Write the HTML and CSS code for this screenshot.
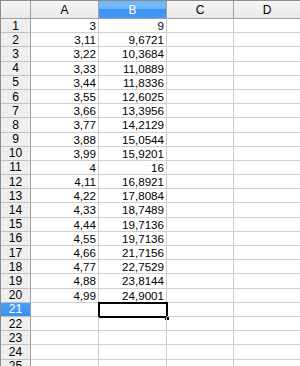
FILE: index.html
```html
<!DOCTYPE html>
<html lang="de">
<head>
    <meta charset="UTF-8">
    <title>Tabelle</title>
    <link rel="stylesheet" href="styles.css">
</head>
<body>
    <div class="sheet">
        <div class="corner"></div>
        <div class="col-head">A</div>
        <div class="col-head active">B</div>
        <div class="col-head">C</div>
        <div class="col-head">D</div>
    </div>
    <script>
        const data = [
            ['3', '9'], ['3,11', '9,6721'], ['3,22', '10,3684'], ['3,33', '11,0889'],
            ['3,44', '11,8336'], ['3,55', '12,6025'], ['3,66', '13,3956'], ['3,77', '14,2129'],
            ['3,88', '15,0544'], ['3,99', '15,9201'], ['4', '16'], ['4,11', '16,8921'],
            ['4,22', '17,8084'], ['4,33', '18,7489'], ['4,44', '19,7136'], ['4,55', '19,7136'],
            ['4,66', '21,7156'], ['4,77', '22,7529'], ['4,88', '23,8144'], ['4,99', '24,9001']
        ];
        const sheet = document.querySelector('.sheet');

        for (let r = 1; r <= 25; r++) {
            const head = document.createElement('div');
            head.className = 'row-head' + (r === 21 ? ' active' : '');
            head.textContent = r;
            sheet.appendChild(head);

            const values = data[r - 1] || ['', ''];
            for (let c = 0; c < 4; c++) {
                const cell = document.createElement('div');
                cell.className = 'cell';
                if (c < 2) cell.textContent = values[c];
                if (r === 21 && c === 1) cell.classList.add('cursor');
                sheet.appendChild(cell);
            }
        }
    </script>
</body>
</html>
```

FILE: styles.css
```css
body {
    margin: 0;
    padding: 0;
    background: #fff;
    overflow: hidden;
    font-family: 'Liberation Sans', Arial, sans-serif;
}

.sheet {
    display: grid;
    grid-template-columns: 30px 68px 68px 67px 67px;
    grid-template-rows: 18px repeat(25, 14.2px);
    border-top: 1px solid #8c8c8c;
    border-left: 1px solid #8c8c8c;
    width: 300px;
    box-sizing: border-box;
}

.corner,
.col-head,
.row-head {
    background: linear-gradient(#f7f7f7, #e8e8e8);
    color: #000;
    font-size: 12px;
    display: flex;
    align-items: center;
    justify-content: center;
    box-sizing: border-box;
}

.corner {
    border-right: 1px solid #a0a0a0;
    border-bottom: 1px solid #a0a0a0;
}

.col-head {
    border-right: 1px solid #a0a0a0;
    border-bottom: 1px solid #a0a0a0;
    padding-top: 1px;
}

.row-head {
    border-right: 1px solid #a0a0a0;
    border-bottom: 1px solid #c0c0c0;
    background: #efefef;
    line-height: 1;
}

.col-head.active {
    background: linear-gradient(#70b6fb 0%, #70b6fb 45%, #3d92f2 50%, #4299f5 100%);
    color: #fff;
}

.row-head.active {
    background: linear-gradient(#4b9ff5, #3c90ee);
    color: #fff;
}

.cell {
    border-right: 1px solid #cfcfcf;
    border-bottom: 1px solid #cfcfcf;
    box-sizing: border-box;
    font-size: 11.6px;
    text-align: right;
    padding-right: 2px;
    line-height: 13px;
    color: #000;
    position: relative;
}

.cursor {
    outline: 2px solid #000;
    outline-offset: -1px;
}

.cursor::after {
    content: '';
    position: absolute;
    right: -3px;
    bottom: -4px;
    width: 4px;
    height: 4px;
    background: #000;
}
```
